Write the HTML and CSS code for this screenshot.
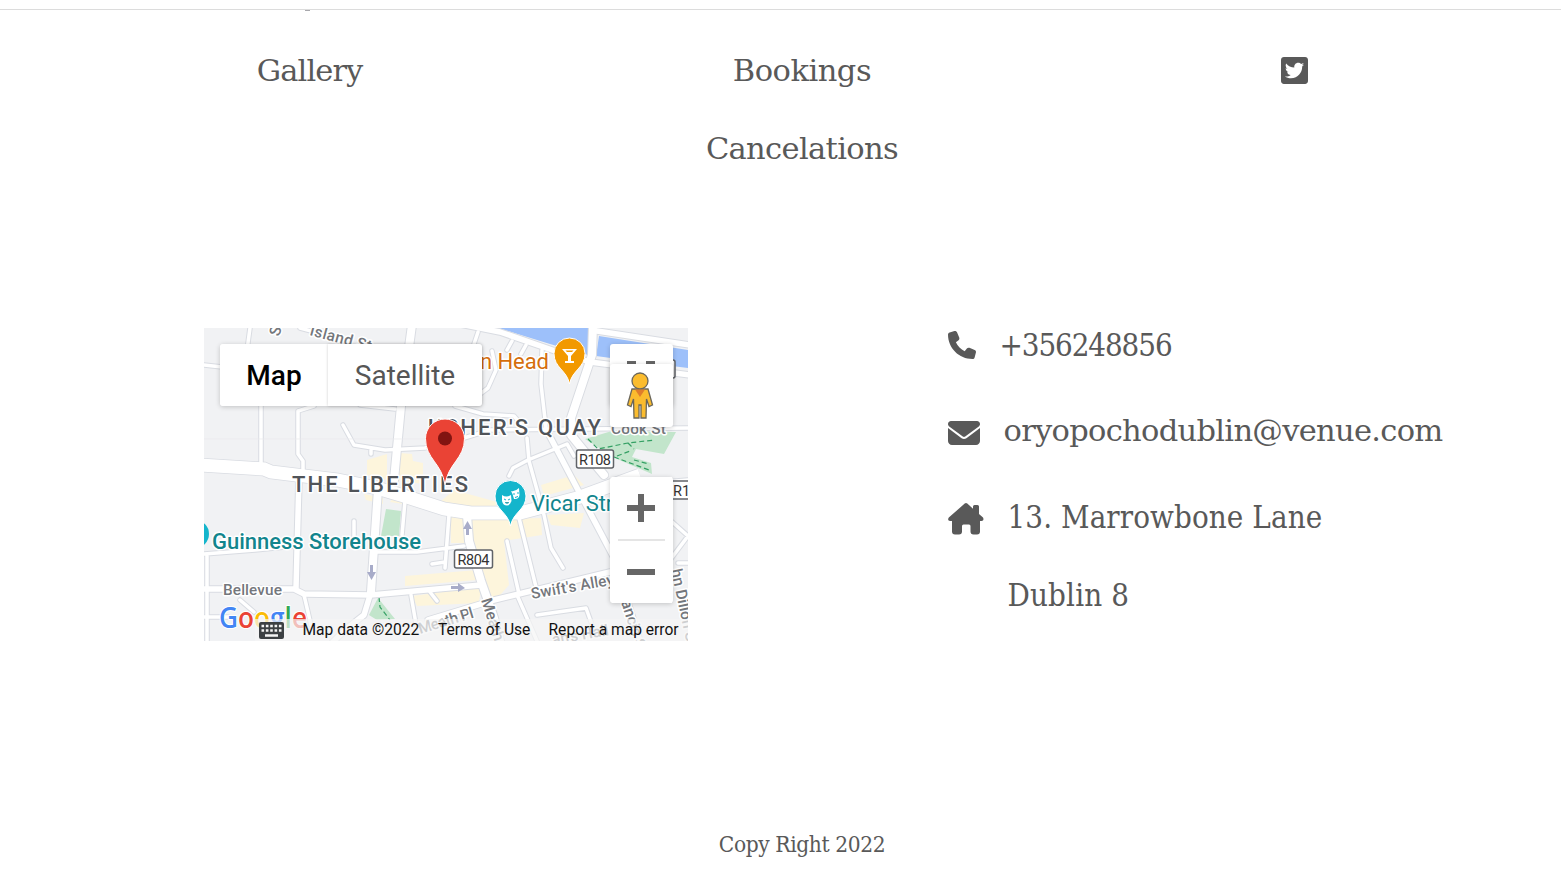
FILE: index.html
```html
<!DOCTYPE html>
<html lang="en">
<head>
<meta charset="utf-8">
<title>Venue</title>
<link rel="stylesheet" href="styles.css">
</head>
<body>
<header class="topbar"><span class="topbar-mark"></span></header>
<footer class="footer">
  <nav class="links">
    <div class="col"><a class="w-gallery">Gallery</a></div>
    <div class="col"><a class="w-bookings">Bookings</a><a class="w-cancel">Cancelations</a></div>
    <div class="col"><a class="social"><svg width="27" height="31" viewBox="0 0 448 512" fill="#595959"><path d="M400 32H48C21.500 32 0 53.500 0 80v352c0 26.500 21.500 48 48 48h352c26.500 0 48-21.500 48-48V80c0-26.500-21.500-48-48-48zm-48.900 158.800c.2 2.800.2 5.700.2 8.500 0 86.700-66 186.600-186.600 186.600-37.200 0-71.700-10.800-100.700-29.400 5.300.6 10.400.8 15.800.8 30.700 0 58.900-10.400 81.400-28-28.800-.6-53-19.500-61.300-45.500 10.100 1.500 19.200 1.500 29.600-1.200-30-6.100-52.500-32.500-52.500-64.400v-.8c8.700 4.900 18.900 7.900 29.600 8.300a65.400 65.400 0 0 1-29.200-54.600c0-12.200 3.200-23.400 8.900-33.100 32.300 39.800 80.800 65.800 135.200 68.600-9.300-44.500 24-80.600 64-80.600 18.900 0 35.900 7.900 47.900 20.700 14.800-2.800 29-8.300 41.600-15.800-4.900 15.200-15.200 28-28.800 36.100 13.200-1.400 26-5.100 37.800-10.200-8.900 13.100-20.100 24.700-32.900 34z"/></svg></a></div>
  </nav>
  <section class="info">
    <div class="map">
      <svg class="tiles" width="484" height="313" viewBox="204 328 484 313">
        <defs>
          <g id="minor" fill="none" stroke-linejoin="round" stroke-linecap="round">
            <path d="M261 400V466M314 406L298 411V454L303 461V472M343 425L354 445L385 450L425 448L440 443M371 450V454M360 405L395 409M204 365L222 367M250 328L247 350M300 328L330 336L350 348"/>
            <path d="M204 554L255 550L295 546M374 552H417L464 546M207 556V641M354 521V545M405 501L402 535M449 515L445 568M445 562L432 564M304 595L311 625M411 595L416 624M430 592L437 601"/>
            <path d="M478 332L472 350M512 341L507 350M526 345L521 354M492 351L496 370L488 388L472 400M455 406L483 414L514 416L526 430M542 350L541 384L546 428M464 438L490 430L688 428M527 438L529 461L544 515L551 548L563 568M509 476L513 468L528 460L567 444L574 456M519 518L537 591M507 541L519 594M517 595L537 641M537 615L586 608L591 622M640 484L688 480M670 520L688 536L670 560M688 563L678 563M204 617H228M240 600L254 612"/>
          </g>
          <g id="medium" fill="none" stroke-linejoin="round" stroke-linecap="round">
            <path d="M299 478L296 588M204 589H294L304 594L371 595L481 585M371 592L364 615L345 630L330 645M440 320L500 332L558 352L590 362L690 375M597 331L690 345M547 431L577 488L614 558L640 641M428 620L494 600L523 593L610 572"/>
          </g>
          <g id="major" fill="none" stroke-linejoin="round" stroke-linecap="round">
            <path d="M412 325L401 406L394 480M378 489L371 592M467 515L469 541L481 581L494 618L501 645M593 325L592 355L571 418V435L584 451L604 475"/>
          </g>
          <path id="main" fill="none" d="M200 465L264 469L271 472L337 480L377 488L404 496L444 509L471 513H520L577 498L640 475"/>
        </defs>
        <rect x="204" y="328" width="484" height="313" fill="#f1f2f4"/>
        <path fill="#fdf5dc" d="M367 460L387 454V480L367 475ZM400 453L412 454L413 461L423 463V484L397 480ZM364 494L383 498V504L366 500ZM395 496L450 513L451 543H466V520L410 505L390 502ZM454 490L497 502L494 510L440 502ZM471 520L541 518L542 535L504 541L509 585L494 602L484 585L474 548ZM547 515L584 513L580 528L551 525ZM541 485L574 475L584 485L544 496ZM405 576L477 570V580L405 586ZM412 596L481 587L479 603L417 606Z"/>
        <g fill="#c2e5cb"><path d="M386 509L401 511L399 536H381ZM369 615L378 598L395 619L377 620Z"/></g>
        <path d="M498 328H592L588 355L550 344ZM599 336L688 350V368L640 362L596 356Z" fill="#9dc0fa"/>
        <path d="M379 597L380 607L390 620" fill="none" stroke="#34a064" stroke-width="1.200" stroke-dasharray="5 3"/>
        <g stroke="#d9dce2"><use href="#minor" stroke-width="5.500"/><use href="#medium" stroke-width="7.500"/><use href="#major" stroke-width="10"/><use href="#main" stroke-width="14.500"/></g>
        <g stroke="#fff"><use href="#minor" stroke-width="3.500"/><use href="#medium" stroke-width="5.500"/><use href="#major" stroke-width="8"/><use href="#main" stroke-width="13"/></g>
        <path d="M585 439L612 431L676 432L664 454L636 449L632 457L651 463L652 474L617 459Z" fill="#c2e5cb"/>
        <path d="M588 439L598 449L628 443L655 440M628 443L634 449M617 456L630 451M614 457L649 470M634 460L649 464" fill="none" stroke="#34a064" stroke-width="1.200" stroke-dasharray="5 3"/>
        <path d="M204 439H425" stroke="#e9eaed" stroke-width=".7"/>
        <g fill="#a8acc9"><path d="M467.500 521L472 529H469V535H466V529H463ZM371.500 580L367 572H370V565H373V572H376ZM465 588L458 583V586H451V589H458V592Z"/></g>
        <g class="street">
          <text x="309" y="335" transform="rotate(15 309 335)" textLength="68">Island St.</text>
          <text x="279" y="337" transform="rotate(-72 279 337)">S</text>
          <text x="223" y="595" textLength="59">Bellevue</text>
          <text x="532" y="599" transform="rotate(-10 532 599)" textLength="84">Swift's Alley</text>
          <text x="611" y="434" textLength="55">Cook St</text>
          <text x="481" y="600" transform="rotate(72 481 600)">Meath St</text>
          <text x="420" y="634" transform="rotate(-17 420 634)" textLength="57">Meath Pl</text>
          <text x="621" y="602" transform="rotate(72 621 602)">ancis St</text>
          <text x="671" y="570" transform="rotate(78 671 570)">hn Dillon St</text>
          <text x="553" y="645" transform="rotate(-10 553 645)">an's Hall</text>
        </g>
        <g class="area"><text x="428" y="435" textLength="173">USHER'S QUAY</text><text x="292" y="492" textLength="176">THE LIBERTIES</text></g>
        <g class="place">
          <text x="480" y="369" fill="#d56e0c" textLength="69">n Head</text>
          <text x="531" y="511" fill="#12858d" textLength="112">Vicar Street</text>
          <text class="bold" x="212" y="549" fill="#12858d" textLength="209">Guinness Storehouse</text>
        </g>
        <g class="shield">
          <rect x="576.500" y="450" width="37" height="18" rx="2"/><text x="595" y="464.500" text-anchor="middle" textLength="32">R108</text>
          <rect x="454.500" y="550" width="38" height="18" rx="2"/><text x="473.500" y="564.500" text-anchor="middle" textLength="32">R804</text>
          <rect x="669" y="481" width="38" height="18" rx="2"/><text x="673" y="495.500">R111</text>
          <rect x="640" y="360" width="35" height="18" rx="2"/>
        </g>
        <g stroke="#fff" stroke-width="1">
          <path d="M569.500 384C567 370 554 368 554 353.500A15.500 15.500 0 0 1 585 353.500C585 368 572 370 569.500 384Z" fill="#f29900"/>
          <path d="M510.500 526C508 512 495 510 495 496A15.500 15.500 0 0 1 526 496C526 510 513 512 510.500 526Z" fill="#14b5cc"/>
        </g>
        <circle cx="195" cy="534" r="14" fill="#14b5cc"/>
        <path d="M562 349H577L571 356V361H574V363H565V361H568V356ZM565.500 350.500L567 352H572L573.500 350.500Z" fill="#fff" fill-rule="evenodd"/>
        <path d="M502 495Q506.500 498 511 495L511.500 501Q510 505.500 507 505.500Q503 505.500 502 501ZM511 491Q515 492 519 488L519.500 495Q519 499.500 514 499L512.500 494Z" fill="#fff"/>
        <path d="M504 499L506 500M508 500L510 499M505 502.500Q507 504 509 502.500M513 494H515M517 493H519M515 497.500L518 496.500" stroke="#14b5cc" stroke-width="1"/>
        <path d="M445 485C442 463 425.500 459 425.500 438.500A19.500 19.500 0 0 1 464.500 438.500C464.500 459 448 463 445 485Z" fill="#ea4335" stroke="#fff" stroke-width="1"/><circle cx="445" cy="438.500" r="7" fill="#811411"/>
        <g class="google"><text x="219" y="628" textLength="88" lengthAdjust="spacingAndGlyphs"><tspan fill="#4285f4">G</tspan><tspan fill="#ea4335">o</tspan><tspan fill="#fbbc05">o</tspan><tspan fill="#4285f4">g</tspan><tspan fill="#34a853">l</tspan><tspan fill="#ea4335">e</tspan></text></g>
      </svg>
      <div class="type-switch"><button class="type-map">Map</button><button class="type-sat">Satellite</button></div>
      <div class="fullscreen"><i></i><i></i></div>
      <div class="pegman">
        <svg width="28" height="48" viewBox="0 0 28 48" fill="#fbbc2e" stroke="#6b675b" stroke-width="1.300"><path d="M6 17H22L26.500 33L23 34.500L20.500 27L20 46H15V33H13V46H8L7.500 27L5 34.500L1.500 33Z"/><circle cx="14" cy="9" r="8"/><path d="M9 17.500H19L14 25Z" fill="#df7d2c" stroke="none"/></svg>
      </div>
      <div class="zoom"><button><svg width="28" height="28"><path d="M0 14H28M14 0V28" stroke="#666" stroke-width="6"/></svg></button><hr><button><svg width="28" height="28"><path d="M0 14H28" stroke="#666" stroke-width="6"/></svg></button></div>
      <div class="legal">
        <svg width="25" height="17" viewBox="0 0 25 17"><rect width="25" height="17" rx="2" fill="#3c4043"/><path d="M2.500 4H22.500M2.500 8.500H22.500" stroke="#f4f4f4" stroke-width="2.500" stroke-dasharray="2.600 1.750"/><path d="M6 13.500H19" stroke="#f4f4f4" stroke-width="2.500"/></svg>
        <span class="t-data">Map data ©2022</span><span class="t-terms">Terms of Use</span><span class="t-report">Report a map error</span>
      </div>
    </div>
    <div class="contact">
      <p><svg width="28" height="28" viewBox="0 0 512 512" fill="#595959"><path d="M164.900 24.600c-7.700-18.600-28-28.500-47.400-23.200l-88 24C12.100 30.200 0 46 0 64C0 311.400 200.600 512 448 512c18 0 33.800-12.100 38.600-29.500l24-88c5.300-19.400-4.600-39.700-23.200-47.400l-96-40c-16.300-6.800-35.200-2.100-46.300 11.600L304.700 368C234.300 334.700 177.300 277.700 144 207.300L193.300 167c13.700-11.200 18.400-30 11.600-46.300l-40-96z"/></svg><span class="w-phone">+356248856</span></p>
      <p><svg width="32" height="32" viewBox="0 0 512 512" fill="#595959"><path d="M48 64C21.500 64 0 85.500 0 112c0 15.100 7.100 29.300 19.200 38.400L236.800 313.600c11.400 8.500 27 8.500 38.400 0L492.800 150.400c12.100-9.100 19.200-23.300 19.200-38.400c0-26.500-21.500-48-48-48H48zM0 176V384c0 35.300 28.700 64 64 64H448c35.300 0 64-28.700 64-64V176L294.400 339.200c-22.800 17.100-54 17.100-76.800 0L0 176z"/></svg><span class="w-mail">oryopochodublin@venue.com</span></p>
      <p class="address"><svg width="36" height="32" viewBox="0 0 36 32" fill="#595959"><path d="M16.700.6Q18 -.4 19.300.6L25 5.700V3.500Q25 2 26.500 2H29.500Q31 2 31 3.500V11L35 14.500Q36.500 17.500 33.500 18H32V28.500Q32 31.500 29 31.500H25.500Q22.500 31.500 22.500 28.500V23Q22.500 21.500 21 21.500H15.500Q14 21.500 14 23V28.500Q14 31.500 11 31.500H7Q4 31.500 4 28.500V18H2Q-1 17.500.8 14.500Z"/></svg><span class="lines"><span class="w-lane">13. Marrowbone Lane</span><span class="w-dublin">Dublin 8</span></span></p>
    </div>
  </section>
  <p class="copyright">Copy Right 2022</p>
</footer>
</body>
</html>
```
FILE: styles.css
```css
* { box-sizing: border-box; }
body { margin: 0; height: 886px; overflow: hidden; background: #fff; color: #595959; font: 30.500px/78px "Roboto Slab", "DejaVu Serif", serif; letter-spacing: -0.65px; }
p { margin: 0; }
.topbar { height: 10px; border-bottom: 1px solid #dcdcdc; position: relative; }
.topbar-mark { position: absolute; left: 305px; top: 10px; width: 5px; height: 1px; background: #a8a8ad; }
.links { display: grid; grid-template-columns: repeat(3, 492.3px); margin-left: 63.500px; padding-top: 22px; height: 318px; }
.col { display: flex; flex-direction: column; align-items: center; }
.col a { height: 78px; white-space: nowrap; }
.w-gallery { letter-spacing: -0.9px; }
.w-bookings { letter-spacing: -0.5px; }
.w-mail { letter-spacing: -0.7px; }
.w-phone, .w-lane, .w-dublin { font-family: "Roboto Slab", "DejaVu Serif Condensed", "DejaVu Serif", serif; font-size: 31px; }
.w-phone { letter-spacing: -1.1px; }
.w-lane { letter-spacing: 0.08px; }
.w-dublin { letter-spacing: 0.15px; }
.lines { display: flex; flex-direction: column; }
.col .social { display: flex; align-items: center; height: 76px; }
.info { display: flex; height: 313px; padding-left: 204px; }
.map { position: relative; width: 484px; height: 313px; overflow: hidden; flex: none; font-family: Roboto, sans-serif; letter-spacing: 0; }
.tiles { display: block; }
.tiles text { paint-order: stroke; stroke: #fff; stroke-width: 3px; stroke-linejoin: round; }
.street text { font-size: 15.500px; fill: #74777c; font-weight: 500; }
.area text { font-size: 22px; fill: #505459; font-weight: 500; }
.place text { font-size: 22px; }
.place .bold { font-weight: 500; }
.shield rect { fill: #fff; stroke: #606368; stroke-width: 1.500px; }
.shield text { font-size: 14.500px; fill: #333; stroke: none; }
.google text { font: 600 29px "Open Sans", sans-serif; stroke-width: 2px; }
button { border: 0; padding: 0; background: #fff; font: inherit; display: flex; align-items: center; justify-content: center; }
.type-switch { position: absolute; left: 16px; top: 16px; display: flex; height: 62px; border-radius: 3px; box-shadow: 0 1px 5px #0003; font-size: 28px; line-height: 62px; }
.type-switch button { padding-top: 2px; }
.type-map { width: 108px; color: #000; font-weight: 500; border-radius: 3px 0 0 3px; }
.type-sat { width: 154px; color: #565656; border-radius: 0 3px 3px 0; box-shadow: 0 0 3px #0003; }
.fullscreen, .pegman, .zoom { position: absolute; left: 406px; width: 63px; background: #fff; border-radius: 3px; box-shadow: 0 1px 5px #0003; display: flex; justify-content: center; }
.fullscreen { top: 16px; height: 62px; gap: 10px; padding: 17px 2px 0 0; }
.fullscreen i { width: 9px; height: 4px; background: #666; }
.pegman { top: 36px; height: 63px; padding-top: 8px; padding-right: 3px; }
.zoom { top: 149px; height: 126px; flex-direction: column; align-items: center; }
.zoom button { height: 62px; width: 60px; padding-right: 2px; }
.zoom hr { width: 47px; height: 2px; border: 0; margin: 0; background: #e5e5e5; flex: none; }
.legal { position: absolute; right: 0; bottom: 0; width: 433px; height: 22px; background: #f5f5f5b3; color: #111; font-size: 15.600px; line-height: 22px; display: flex; align-items: center; padding-left: 4px; white-space: nowrap; }
.t-data { margin-left: 18.500px; width: 117.500px; }
.t-terms { margin-left: 18px; width: 93px; }
.t-report { margin-left: 17.500px; width: 130.500px; }
.contact { width: 520px; margin-left: 260px; margin-top: -22px; white-space: nowrap; }
.contact p { display: flex; height: 86px; gap: 23.500px; }
.contact p > svg { margin-top: 25px; flex: none; }
.copyright { margin: 183px 0 0; text-align: center; padding-left: 43px; font: 22.500px/40px "Roboto Slab", "DejaVu Serif Condensed", "DejaVu Serif", serif; letter-spacing: -0.4px; }
```
